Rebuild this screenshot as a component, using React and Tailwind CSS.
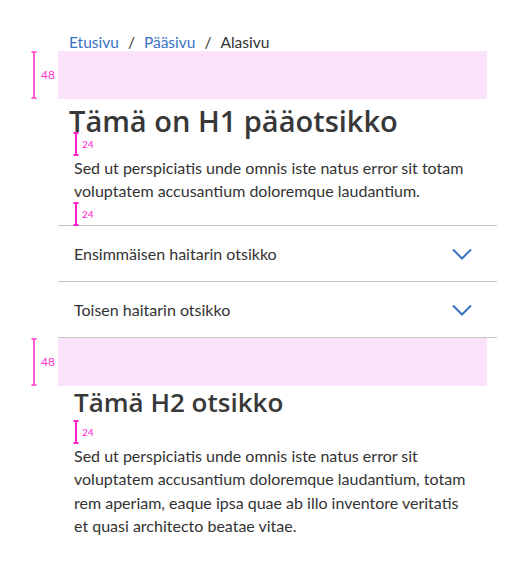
import React from 'react'

const body = { fontFamily: 'Lato, "Open Sans", sans-serif' }
const head = { fontFamily: '"Open Sans", Lato, sans-serif' }

const Bar = ({ h }) => (
  <svg width="6" height={h} viewBox={`0 0 6 ${h}`} className="shrink-0">
    <line x1="3" y1="1" x2="3" y2={h - 1} stroke="currentColor" strokeWidth="2" />
    <line x1="0.5" y1="1" x2="5.5" y2="1" stroke="currentColor" strokeWidth="2" />
    <line x1="0.5" y1={h - 1} x2="5.5" y2={h - 1} stroke="currentColor" strokeWidth="2" />
  </svg>
)

// 48px spacer with the pink block
const BigSpace = () => (
  <div className="flex h-[48px]">
    <div className="w-[58px] flex items-center pl-[31px] text-[#ff5fd2]">
      <Bar h={48} />
      <span className="ml-[4px] text-[12px] text-[#ff33cc]" style={body}>48</span>
    </div>
    <div className="w-[429px] bg-[#fae3fa]" />
  </div>
)

// 24px spacer marker
const SmallSpace = ({ className = 'h-[24px]' }) => (
  <div className={`${className} flex items-center pl-[73px] text-[#ff22cc]`}>
    <Bar h={24} />
    <span className="ml-[3px] text-[10px] leading-none" style={body}>24</span>
  </div>
)

const Chevron = () => (
  <svg width="20" height="12" viewBox="0 0 20 12" fill="none" className="mr-[25px]">
    <path d="M1 1.5 L10 10.5 L19 1.5" stroke="#3673c6" strokeWidth="2" />
  </svg>
)

const items = ['Ensimmäisen haitarin otsikko', 'Toisen haitarin otsikko']

export default function App() {
  return (
    <div className="w-[525px] min-h-[585px] bg-white text-[#333]" style={body}>
      <nav className="pt-[33px] pl-[69px] flex items-center text-[15.5px] leading-[18px]">
        <a href="#" className="text-[#3673c6]">Etusivu</a>
        <span className="mx-[9px]">/</span>
        <a href="#" className="text-[#3673c6]">Pääsivu</a>
        <span className="mx-[9px]">/</span>
        <span>Alasivu</span>
      </nav>

      <BigSpace />

      <h1 className="pl-[69px] pt-[10px] text-[29px] leading-[23px] font-semibold text-[#383838]" style={head}>
        Tämä on H1 pääotsikko
      </h1>
      <SmallSpace />
      <p className="pl-[74px] pr-[50px] text-[16px] leading-[23px]">
        Sed ut perspiciatis unde omnis iste natus error sit totam voluptatem accusantium doloremque laudantium.
      </p>
      <SmallSpace className="h-[23px]" />

      <div className="w-[439px] ml-[58px] border-t border-[#c6c6c6]">
        {items.map(t => (
          <div key={t} className="h-[56px] flex items-center justify-between border-b border-[#c6c6c6]">
            <span className="pl-[16px] text-[16px] leading-[24px]">{t}</span>
            <Chevron />
          </div>
        ))}
      </div>

      <BigSpace />

      <h2 className="pl-[74px] text-[26px] leading-[32px] pb-[2px] font-semibold text-[#383838]" style={head}>
        Tämä H2 otsikko
      </h2>
      <SmallSpace />
      <p className="pl-[74px] pr-[50px] text-[16px] leading-[23.3px]">
        Sed ut perspiciatis unde omnis iste natus error sit voluptatem accusantium doloremque laudantium, totam rem aperiam, eaque ipsa quae ab illo inventore veritatis et quasi architecto beatae vitae.
      </p>
    </div>
  )
}
